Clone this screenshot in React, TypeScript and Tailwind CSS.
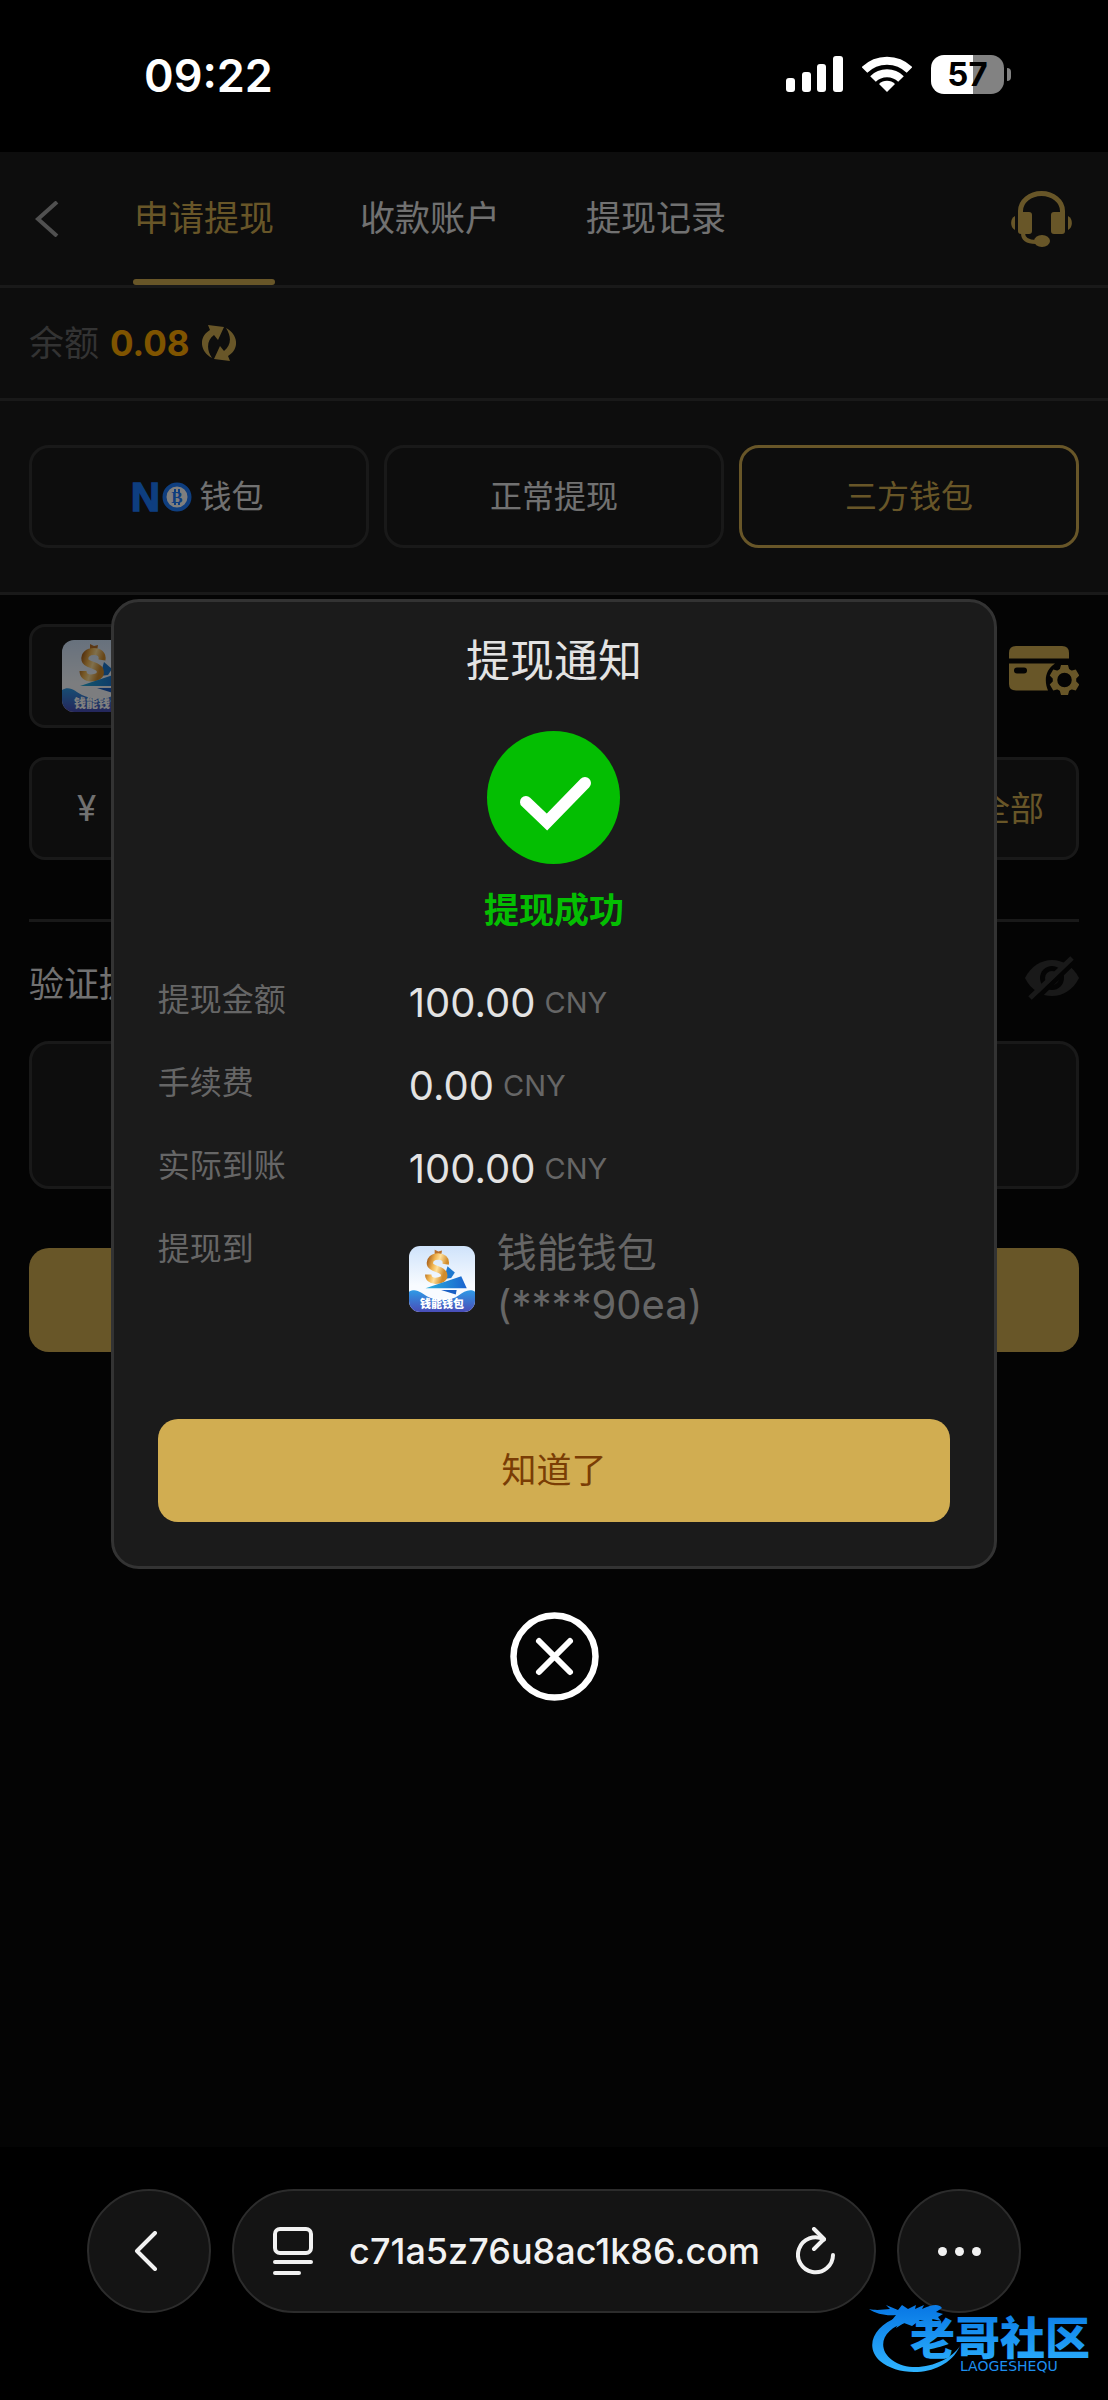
import React, { useState } from 'react';

const FONT = "font-['Inter','Noto_Sans_CJK_SC',sans-serif]";

const tabs = ['申请提现', '收款账户', '提现记录'];

const amounts = [
  { label: '提现金额', value: '100.00' },
  { label: '手续费', value: '0.00' },
  { label: '实际到账', value: '100.00' },
];

function StatusBar() {
  return (
    <div className="flex h-[152px] shrink-0 items-center justify-between pl-[144px] pr-[97px]">
      <span className="text-[45px] leading-[56px] font-semibold text-white">09:22</span>
      <div className="flex items-center gap-[19px] pb-1">
        <svg width="57" height="36" viewBox="0 0 57 36" fill="#fff">
          <rect x="0" y="22" width="9" height="14" rx="3" />
          <rect x="16" y="16" width="9" height="20" rx="3" />
          <rect x="31" y="8" width="9" height="28" rx="3" />
          <rect x="47" y="0" width="10" height="36" rx="3" />
        </svg>
        <svg width="50" height="36" viewBox="0 0 50 36" fill="none" stroke="#fff" strokeWidth="8">
          <path d="M2.500 14 A32 32 0 0 1 47.500 14" />
          <path d="M11 23 A20 20 0 0 1 39 23" />
          <path d="M25 36 L17 28 A11.500 11.500 0 0 1 33 28 Z" fill="#fff" stroke="none" />
        </svg>
        <div className="flex items-center gap-[3px]">
          <div className="flex h-[39px] w-[73px] items-center justify-center rounded-[13px] bg-[linear-gradient(90deg,#fff_57%,#828282_57%)] text-[33px] leading-[39px] font-bold text-black">
            57
          </div>
          <div className="h-[13px] w-[4px] rounded-r-full bg-[#828282]" />
        </div>
      </div>
    </div>
  );
}

function HeadsetIcon() {
  return (
    <svg width="63" height="56" viewBox="0 0 63 56" fill="#d1ad51">
      <path d="M10.500 26 V20 A21 17.500 0 0 1 52.500 20 V26" fill="none" stroke="#d1ad51" strokeWidth="5" />
      <rect x="8" y="21" width="14" height="22" rx="3" />
      <rect x="41" y="21" width="14" height="22" rx="3" />
      <path d="M5 25 A6 7.500 0 0 0 5 39 Z" />
      <path d="M58 25 A6 7.500 0 0 1 58 39 Z" />
      <path d="M13 42 C13 48 17 51 26 51" fill="none" stroke="#d1ad51" strokeWidth="4" />
      <ellipse cx="32" cy="50" rx="8" ry="6" />
    </svg>
  );
}

function RefreshIcon() {
  return (
    <svg width="34" height="36" viewBox="0 0 34 36" fill="#d1ad51">
      <path d="M10 33 C-2 27 -4 12 8 5 L6 0 L22 2 L16 15 L12 10 C5 15 4 24 10 33 Z" />
      <path d="M24 3 C36 9 38 24 26 31 L28 36 L12 34 L18 21 L22 26 C29 21 30 12 24 3 Z" />
    </svg>
  );
}

function NoLogo() {
  return (
    <svg className="overflow-visible" width="59" height="30" viewBox="0 0 59 30">
      <text
        x="-3"
        y="29"
        fontSize="40"
        fontWeight="700"
        fill="#1c7cff"
        stroke="#1c7cff"
        strokeWidth="1.500"
        className="font-['Liberation_Sans',sans-serif]"
      >
        N
      </text>
      <circle cx="43" cy="15" r="12.500" fill="#fff" stroke="#1c7cff" strokeWidth="4" />
      <text x="43" y="21" fontSize="17" fontWeight="700" textAnchor="middle" fill="#1c7cff" className="font-['Liberation_Serif',serif]">
        B
      </text>
      <path d="M41 7 V11 M45 7 V11 M41 20 V23 M45 20 V23" stroke="#1c7cff" strokeWidth="2" />
    </svg>
  );
}

function WalletLogo({ className }: { className: string }) {
  return (
    <svg className={className} viewBox="0 0 72 72">
      <defs>
        <linearGradient id="sky" x1="0" y1="0" x2="0" y2="1">
          <stop offset="0" stopColor="#cfe3fb" />
          <stop offset="0.600" stopColor="#f8fbff" />
        </linearGradient>
        <linearGradient id="sea" x1="0" y1="0" x2="0" y2="1">
          <stop offset="0" stopColor="#2f9ae6" />
          <stop offset="1" stopColor="#4a4db8" />
        </linearGradient>
        <linearGradient id="gold" x1="0" y1="0" x2="1" y2="0.400">
          <stop offset="0" stopColor="#a8601c" />
          <stop offset="0.350" stopColor="#f0b450" />
          <stop offset="0.600" stopColor="#ffe09a" />
          <stop offset="1" stopColor="#d18c2c" />
        </linearGradient>
        <linearGradient id="plane" x1="0" y1="0" x2="1" y2="0">
          <stop offset="0" stopColor="#28b0dc" />
          <stop offset="1" stopColor="#1a62cf" />
        </linearGradient>
      </defs>
      <rect width="72" height="72" rx="12" fill="url(#sky)" />
      <path d="M42 22 L50 29 L46 35 L38 36 Z" fill="#1d78cf" />
      <path d="M28 4 L32 6 L36 5 L35 11 L28 11 Z" fill="#b9702a" />
      <path
        d="M40 20 C41 14 37 11.500 32 11.500 C26 11.500 22 15 23 20 C24 25 36 25 38 30 C40 36 34 38 29 38 C24 38 21 35 21 31"
        fill="none"
        stroke="url(#gold)"
        strokeWidth="7"
      />
      <path d="M18 46 L57 33 L63 46 Z" fill="url(#plane)" />
      <path d="M35 48 L52 48 L51 53 Z" fill="#1a5fc4" />
      <path d="M0 50 C8 45 14 52 20 55 C30 60 46 60 54 54 C60 50 66 46 72 50 V60 A12 12 0 0 1 60 72 H12 A12 12 0 0 1 0 60 Z" fill="url(#sea)" />
      <text x="36" y="68" fontSize="12" fontWeight="900" textAnchor="middle" fill="#fff" className="font-['Noto_Sans_CJK_SC',sans-serif]">
        钱能钱包
      </text>
    </svg>
  );
}

function CardSettingsIcon() {
  return (
    <svg width="70" height="49" viewBox="0 0 70 49" fill="#d1ad51">
      <path d="M0 12.500 V7 Q0 0 7 0 H53 Q60 0 60 7 V12.500 Z" />
      <path d="M0 17.500 H46 C36 24 35 35 39 44.500 H7 Q0 44.500 0 38 Z" />
      <rect x="5" y="21.500" width="13" height="6" rx="3" fill="#080808" />
      <g transform="translate(55.500 34)">
        <circle r="9.500" fill="none" stroke="#d1ad51" strokeWidth="4.500" />
        {[0, 60, 120, 180, 240, 300].map((angle) => (
          <path key={angle} d="M-5 -9.500 L-3.500 -15 H3.500 L5 -9.500 Z" transform={`rotate(${angle})`} />
        ))}
      </g>
    </svg>
  );
}

function EyeOffIcon() {
  return (
    <svg width="54" height="44" viewBox="0 0 54 44">
      <path d="M0 22 C12 -2 42 -2 54 22 C42 46 12 46 0 22 Z" fill="#323232" />
      <circle cx="27" cy="22" r="12" fill="#080808" />
      <circle cx="27" cy="22" r="7" fill="#323232" />
      <path d="M8 46 L50 5" stroke="#080808" strokeWidth="5" />
      <path d="M5 42 L47 2" stroke="#323232" strokeWidth="5" />
    </svg>
  );
}

function Watermark() {
  return (
    <svg className="pointer-events-none absolute right-[14px] bottom-[20px]" width="226" height="80" viewBox="0 0 226 80">
      <defs>
        <linearGradient id="azure" gradientUnits="userSpaceOnUse" x1="0" y1="10" x2="0" y2="72">
          <stop offset="0" stopColor="#0a7be6" />
          <stop offset="1" stopColor="#2fb4ff" />
        </linearGradient>
      </defs>
      <path
        d="M30 17 C6 26 -4 46 12 61 C32 78 78 77 92 46 C82 62 46 76 24 60 C8 48 14 28 40 22 Z"
        fill="url(#azure)"
      />
      <path
        d="M1 9 C10 11 16 9 22 9 L18 5 L30 10 L34 5 L40 9 L48 5 L47 9 L56 5 L54 9 C64 5 70 3 74 8 L68 12 L75 14 L70 17 L73 21 L60 18 L64 23 L52 20 L44 26 L36 23 L28 28 L32 20 L24 20 L28 15 C18 16 8 14 1 9 Z"
        fill="url(#azure)"
      />
      <text x="42" y="55" fontSize="45" fontWeight="900" fill="url(#azure)" className="font-['Noto_Sans_CJK_SC',sans-serif]">
        老哥社区
      </text>
      <text x="92" y="71" fontSize="14" fill="#1d8ff0" className="font-['DejaVu_Sans',sans-serif]">
        LAOGESHEQU
      </text>
    </svg>
  );
}

function NoticeModal({ onClose }: { onClose: () => void }) {
  return (
    <div className="absolute inset-0 flex flex-col items-center justify-center gap-[43px] bg-black/50">
      <div role="dialog" aria-labelledby="notice-title" className="w-4/5 rounded-[28px] border-[3px] border-[#333] bg-[#1b1b1b] px-[44px] pt-[29px] pb-[44px]">
        <h2 id="notice-title" className="text-center text-[44px] leading-[60px] text-[#e3e3e3]">提现通知</h2>
        <svg className="mx-auto mt-[40px]" width="133" height="133" viewBox="0 0 133 133" fill="none">
          <circle cx="66.500" cy="66.500" r="66.500" fill="#04be02" />
          <path d="M39 71 L60 91 L98 52" stroke="#fff" strokeWidth="12" strokeLinecap="round" />
        </svg>
        <p className="mt-[22px] text-center text-[35px] leading-[48px] font-bold text-[#04be02]">提现成功</p>

        <dl className="mt-[34px] grid grid-cols-[251px_1fr] gap-y-5">
          {amounts.map((row) => (
            <React.Fragment key={row.label}>
              <dt className="text-[32px] leading-[63px] text-[#666]">{row.label}</dt>
              <dd className="flex h-[63px] items-center gap-[9px] pt-2">
                <span className="text-[40px] leading-[56px] text-[#e3e3e3]">{row.value}</span>
                <span className="pb-px text-[29px] leading-[56px] text-[#666]">CNY</span>
              </dd>
            </React.Fragment>
          ))}
          <dt className="text-[32px] leading-[63px] text-[#666]">提现到</dt>
          <dd className="flex items-center gap-[22px] pt-[10px]">
            <WalletLogo className="h-[66px] w-[66px] shrink-0" />
            <p className="text-[40px] leading-[52px] text-[#666]">
              钱能钱包
              <br />
              (****90ea)
            </p>
          </dd>
        </dl>

        <button onClick={onClose} className="mt-[88px] h-[103px] w-full rounded-[20px] bg-[#d1ad51] text-[35px] text-[#7a3d05]">
          知道了
        </button>
      </div>
      <button onClick={onClose} aria-label="关闭">
        <svg width="89" height="89" viewBox="0 0 89 89" fill="none" stroke="#fff">
          <circle cx="44.500" cy="44.500" r="41" strokeWidth="6.500" />
          <path d="M29 29 L60 60 M60 29 L29 60" strokeWidth="6" strokeLinecap="round" />
        </svg>
      </button>
    </div>
  );
}

function WithdrawForm() {
  return (
    <form className="flex flex-col px-[29px] pt-[29px]" onSubmit={(e) => e.preventDefault()}>
      <div className="flex items-center gap-[29px]">
        <div className="flex h-[104px] flex-1 items-center gap-5 rounded-[16px] border-[3px] border-[#323232] bg-[#1a1a1a] px-[30px]">
          <WalletLogo className="h-[72px] w-[72px] shrink-0" />
          <select aria-label="收款钱包" className="flex-1 appearance-none bg-transparent text-[32px] text-[#e3e3e3]" />
        </div>
        <button type="button" aria-label="管理账户" className="pb-3">
          <CardSettingsIcon />
        </button>
      </div>
      <div className="mt-[29px] flex h-[103px] items-center gap-5 rounded-[16px] border-[3px] border-[#323232] bg-[#1a1a1a] pr-[32px] pl-[45px]">
        <label htmlFor="amount" className="text-[35px] text-[#e3e3e3]">¥</label>
        <input id="amount" className="min-w-0 flex-1 bg-transparent text-[32px] text-[#e3e3e3] outline-none" />
        <button type="button" className="text-[34px] text-[#d1ad51]">全部</button>
      </div>
      <hr className="mt-[59px] border-t-[3px] border-[#323232]" />
      <div className="mt-[34px] flex h-[56px] items-center justify-between">
        <label htmlFor="pin" className="text-[35px] text-[#e3e3e3]">验证提现密码</label>
        <button type="button" aria-label="显示密码" className="self-start">
          <EyeOffIcon />
        </button>
      </div>
      <input
        id="pin"
        type="password"
        className="mt-[29px] h-[148px] rounded-[20px] border-[3px] border-[#323232] bg-[#1a1a1a] px-8 text-[48px] text-[#e3e3e3] outline-none"
      />
      <button className="mt-[59px] h-[104px] rounded-[20px] bg-[#d1ad51]" aria-label="确认提现" />
    </form>
  );
}

function BrowserBar() {
  const glass = 'border-2 border-[#2c2c2c] bg-[#141414] rounded-full h-[124px]';
  return (
    <div className="relative h-[253px] shrink-0 px-[87px] pt-[42px]">
      <div className="flex items-center gap-[21px]">
        <button aria-label="返回" className={`${glass} flex w-[124px] shrink-0 items-center justify-center`}>
          <svg className="mr-[6px]" width="24" height="40" viewBox="0 0 24 40" fill="none" stroke="#f2f2f2" strokeWidth="4" strokeLinecap="round" strokeLinejoin="round">
            <path d="M21 2 L3 20 L21 38" />
          </svg>
        </button>
        <div className={`${glass} flex flex-1 items-center justify-between px-[39px]`}>
          <svg width="40" height="48" viewBox="0 0 40 48" fill="none" stroke="#f2f2f2" strokeWidth="4" strokeLinecap="round">
            <rect x="2" y="2" width="36" height="24" rx="5" />
            <path d="M2 35 H38 M2 46 H26" />
          </svg>
          <span className="text-[36px] leading-[48px] font-medium text-[#f2f2f2]">c71a5z76u8ac1k86.com</span>
          <button aria-label="刷新">
            <svg width="39" height="48" viewBox="0 0 39 48" fill="none" stroke="#f2f2f2" strokeWidth="4" strokeLinecap="round" strokeLinejoin="round">
              <path d="M37 28 A17.500 17.500 0 1 1 28 12.500" />
              <path d="M18 2 L28 12 L18 22" />
            </svg>
          </button>
        </div>
        <button aria-label="更多" className={`${glass} flex w-[124px] shrink-0 items-center justify-center gap-[8px]`}>
          <i className="h-[9px] w-[9px] rounded-full bg-[#f2f2f2]" />
          <i className="h-[9px] w-[9px] rounded-full bg-[#f2f2f2]" />
          <i className="h-[9px] w-[9px] rounded-full bg-[#f2f2f2]" />
        </button>
      </div>
      <Watermark />
    </div>
  );
}

export default function App() {
  const [isOpen, setIsOpen] = useState(true);

  return (
    <div className={`flex min-h-screen flex-col bg-black ${FONT}`}>
      <StatusBar />
      <main className="relative flex-1 bg-[#080808]">
        <header className="flex h-[136px] items-center border-b-[3px] border-[#323232] bg-[#1a1a1a] px-[35px]">
          <button aria-label="返回">
            <svg width="24" height="36" viewBox="0 0 24 36" fill="none" stroke="#a0a0a0" strokeWidth="4">
              <path d="M22 1 L3 18 L22 35" />
            </svg>
          </button>
          <nav className="ml-[74px] flex h-full flex-1 gap-[84px]">
            {tabs.map((tab, i) => (
              <button
                key={tab}
                className={i === 0 ? 'relative px-px text-[35px] text-[#d1ad51]' : 'px-px text-[35px] text-[#e3e3e3]'}
              >
                {tab}
                {i === 0 && <span className="absolute inset-x-0 bottom-0 h-[6px] rounded-full bg-[#d1ad51]" />}
              </button>
            ))}
          </nav>
          <button aria-label="客服">
            <HeadsetIcon />
          </button>
        </header>

        <section className="flex h-[113px] items-center border-b-[3px] border-[#323232] bg-[#1a1a1a] px-[29px] text-[35px]">
          <span className="text-[#666]">余额</span>
          <span className="ml-[11px] font-bold text-[#ffa800]">0.08</span>
          <button aria-label="刷新余额" className="ml-3">
            <RefreshIcon />
          </button>
        </section>

        <section className="grid grid-cols-3 gap-[15px] border-b-[3px] border-[#323232] bg-[#1a1a1a] px-[29px] py-[44px] text-[32px] text-[#e3e3e3]">
          <button className="flex h-[103px] items-center justify-center gap-[6px] rounded-[20px] border-[3px] border-[#323232]">
            <NoLogo />
            钱包
          </button>
          <button className="h-[103px] rounded-[20px] border-[3px] border-[#323232]">正常提现</button>
          <button className="h-[103px] rounded-[20px] border-[3px] border-[#d1ad51] text-[#d1ad51]">三方钱包</button>
        </section>

        <WithdrawForm />
        {isOpen && <NoticeModal onClose={() => setIsOpen(false)} />}
      </main>
      <BrowserBar />
    </div>
  );
}
